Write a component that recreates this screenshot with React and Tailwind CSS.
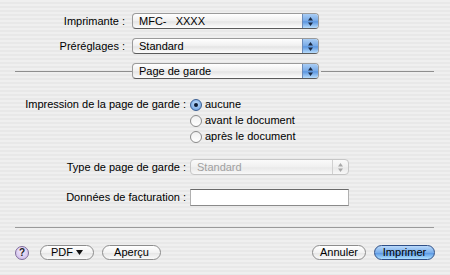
import React from "react";

const Arrows = ({ color = "#1a2a44" }) => (
  <svg width="7" height="11" viewBox="0 0 7 11">
    <path d="M3.5 1 L6 4.5 L1 4.5 Z" fill={color} />
    <path d="M3.5 10 L6 6.5 L1 6.5 Z" fill={color} />
  </svg>
);

const Popup = ({ value, width = "w-[187px]" }) => (
  <div
    className={`${width} h-[16px] flex rounded-[4px] border border-[#9a9a9a] border-b-[#5a5a5a] bg-[linear-gradient(#ffffff,#efefef_50%,#e4e4e4_55%,#fdfdfd)] overflow-hidden`}
  >
    <div className="flex-1 pl-[6px] flex items-center text-[11px] leading-none text-black">
      {value}
    </div>
    <div className="w-[16px] flex items-center justify-center border-l border-[#6b8ab8] bg-[linear-gradient(#a9cdf5,#77a9e6_50%,#5b96e0_55%,#b8dcfb)]">
      <Arrows />
    </div>
  </div>
);

const DisabledPopup = ({ value }) => (
  <div className="w-[159px] h-[16px] flex rounded-[4px] border border-[#c6c6c6] bg-[linear-gradient(#fafafa,#f0f0f0_50%,#e9e9e9_55%,#f8f8f8)] overflow-hidden">
    <div className="flex-1 pl-[6px] flex items-center text-[11px] leading-none text-[#a0a0a0]">
      {value}
    </div>
    <div className="w-[16px] flex items-center justify-center border-l border-[#d0d0d0]">
      <Arrows color="#a8a8a8" />
    </div>
  </div>
);

const Radio = ({ checked, label }) => (
  <div className="flex items-center h-[15px]">
    {checked ? (
      <div className="w-[12px] h-[12px] rounded-full border border-[#3a5f94] bg-[radial-gradient(circle_at_50%_40%,#c6e0fb,#5f97dc)] flex items-center justify-center">
        <div className="w-[4px] h-[4px] rounded-full bg-[#0b1a33]" />
      </div>
    ) : (
      <div className="w-[12px] h-[12px] rounded-full border border-[#8a8a8a] bg-[linear-gradient(#f0f0f0,#ffffff)]" />
    )}
    <span className="ml-[3px] text-[11px] leading-none text-black">{label}</span>
  </div>
);

const PillButton = ({ children, width }) => (
  <div
    className={`${width} h-[15px] rounded-full border border-[#8c8c8c] bg-[linear-gradient(#ffffff,#f2f2f2_50%,#e6e6e6_55%,#fafafa)] flex items-center justify-center text-[11px] leading-none text-black`}
  >
    {children}
  </div>
);

export default function App() {
  return (
    <div
      className="w-[450px] h-[275px] overflow-hidden bg-[repeating-linear-gradient(180deg,#efefef_0px,#efefef_2px,#e8e8e8_2px,#e8e8e8_4px)] text-black"
      style={{ fontFamily: '"Liberation Sans", Arial, sans-serif' }}
    >
      <div className="pt-[13px] flex flex-col">
        <div className="flex items-center">
          <div className="w-[125px] text-right text-[11px] leading-none">Imprimante :</div>
          <div className="ml-[7px]">
            <Popup value={<span>MFC-&nbsp;&nbsp;&nbsp;XXXX</span>} />
          </div>
        </div>
        <div className="flex items-center mt-[9px]">
          <div className="w-[125px] text-right text-[11px] leading-none">Préréglages :</div>
          <div className="ml-[7px]">
            <Popup value="Standard" />
          </div>
        </div>
        <div className="flex items-center mt-[9px]">
          <div className="ml-[15px] w-[117px] h-px bg-[#8e8e8e]" />
          <Popup value="Page de garde" />
          <div className="ml-[2px] w-[113px] h-px bg-[#8e8e8e]" />
        </div>

        <div className="flex mt-[18px]">
          <div className="w-[186px] h-[15px] flex items-center justify-end text-[11px] leading-none">
            Impression de la page de garde :
          </div>
          <div className="ml-[4px] flex flex-col gap-[1px]">
            <Radio checked label="aucune" />
            <Radio label="avant le document" />
            <Radio label="après le document" />
          </div>
        </div>

        <div className="flex items-center mt-[15px]">
          <div className="w-[186px] text-right text-[11px] leading-none">Type de page de garde :</div>
          <div className="ml-[4px]">
            <DisabledPopup value="Standard" />
          </div>
        </div>

        <div className="flex items-center mt-[14px]">
          <div className="w-[186px] text-right text-[11px] leading-none">Données de facturation :</div>
          <div className="ml-[4px] w-[159px] h-[17px] bg-white border border-[#8a8a8a] border-t-[#6a6a6a] border-l-[#b0b0b0] border-r-[#b0b0b0]" />
        </div>

        <div className="ml-[15px] mt-[21px] w-[419px] h-px bg-[#9a9a9a]" />

        <div className="flex items-center mt-[17px] px-[15px]">
          <div className="w-[14px] h-[14px] rounded-full border border-[#7d6a9a] bg-[radial-gradient(circle_at_50%_35%,#f4ecff,#c9b5e6)] flex items-center justify-center text-[10px] font-bold leading-none text-[#222]">
            ?
          </div>
          <div className="ml-[11px]">
            <PillButton width="w-[54px]">
              <span>PDF</span>
              <svg className="ml-[3px]" width="7" height="5" viewBox="0 0 7 5">
                <path d="M0 0 H7 L3.5 5 Z" fill="#111" />
              </svg>
            </PillButton>
          </div>
          <div className="ml-[8px]">
            <PillButton width="w-[59px]">Aperçu</PillButton>
          </div>
          <div className="flex-1" />
          <PillButton width="w-[54px]">Annuler</PillButton>
          <div className="ml-[8px] w-[61px] h-[15px] rounded-full border border-[#2f4f86] bg-[linear-gradient(#b9d9fb,#7aaeea_50%,#5b98e3_55%,#aee0ff)] flex items-center justify-center text-[11px] leading-none text-black">
            Imprimer
          </div>
        </div>
      </div>
    </div>
  );
}
